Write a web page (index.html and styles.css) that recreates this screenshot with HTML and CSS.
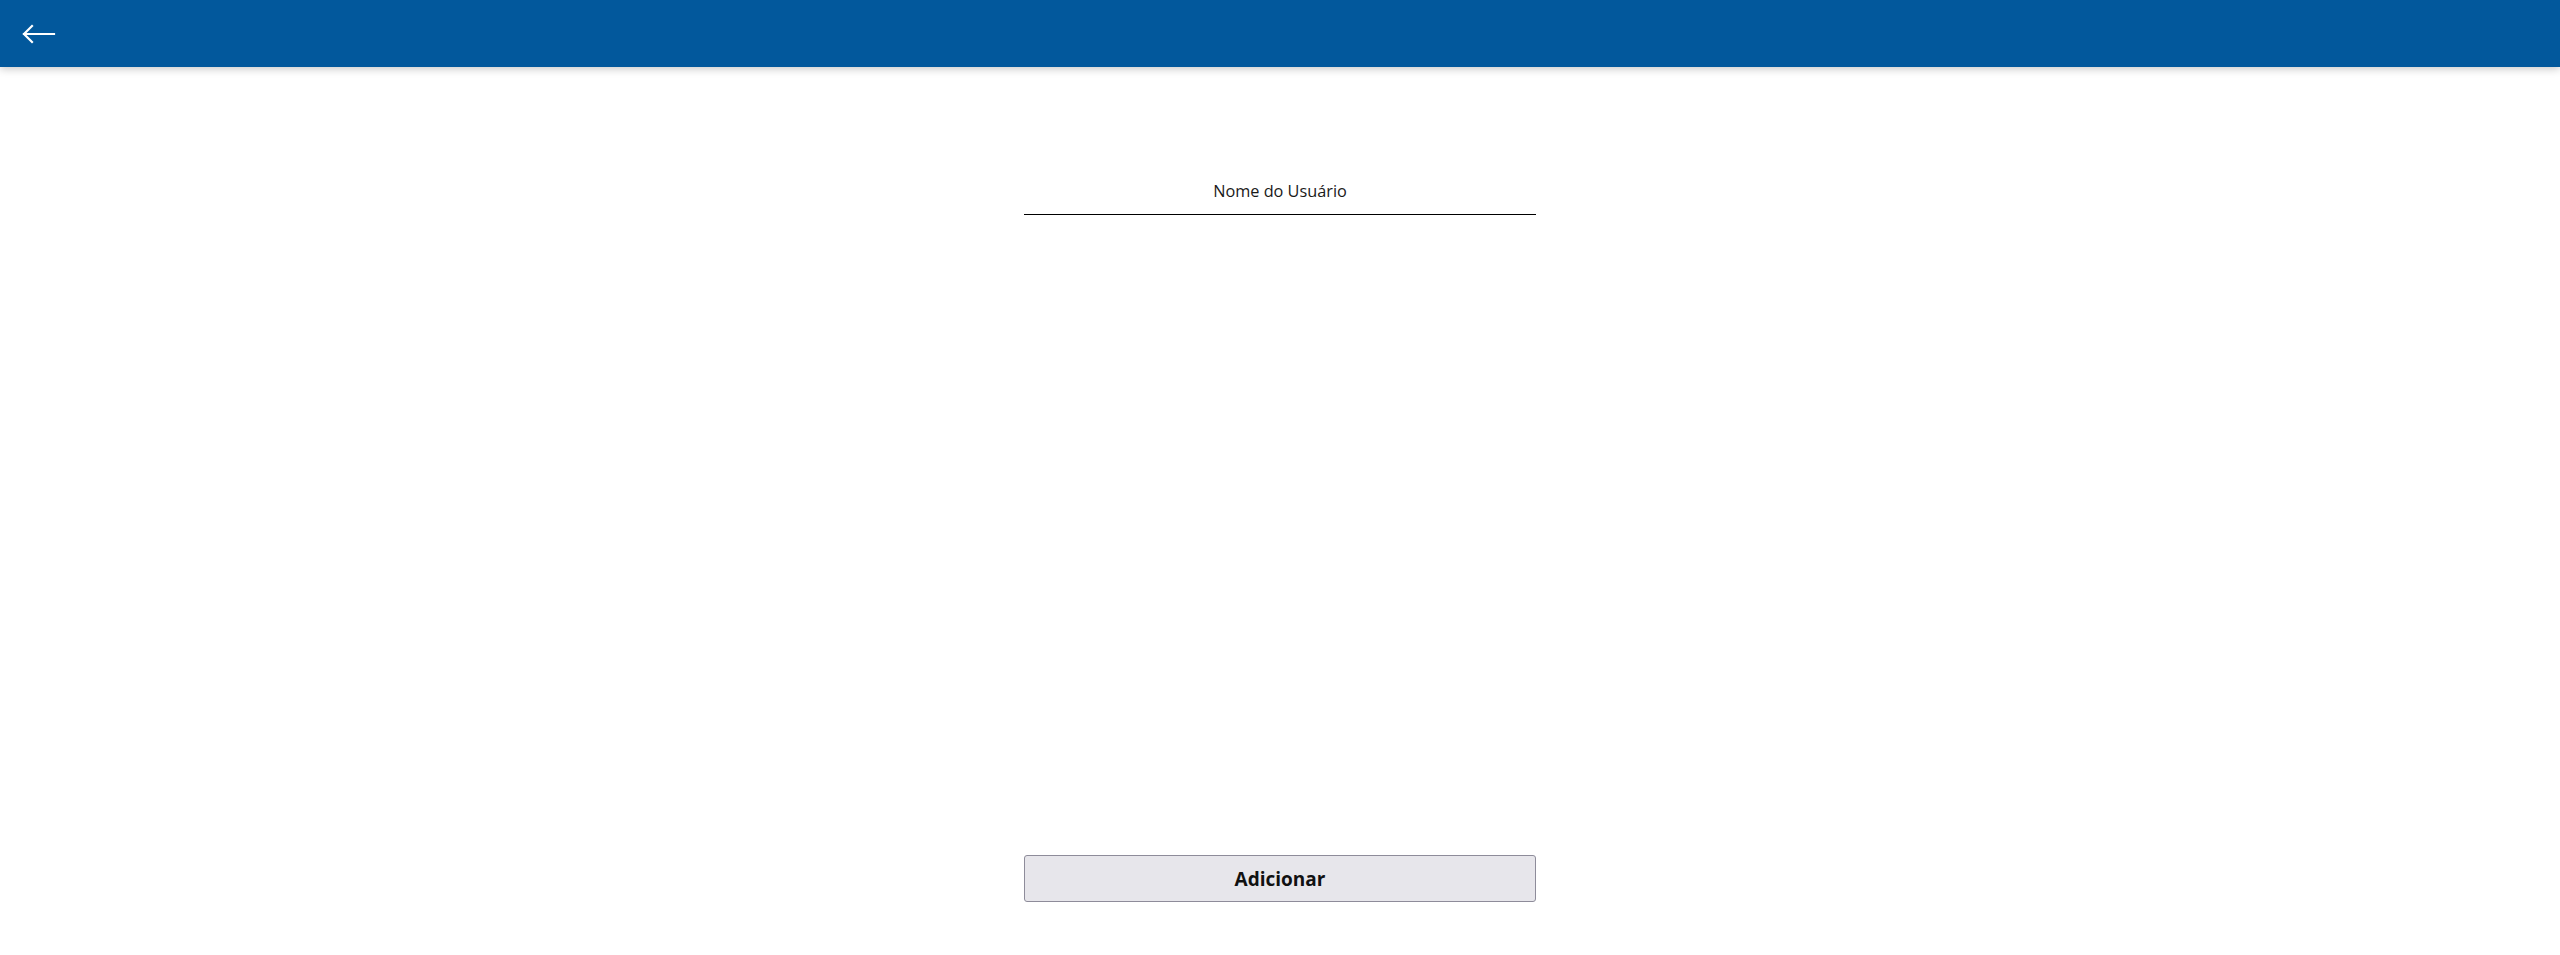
FILE: index.html
```html
<!DOCTYPE html>
<html lang="pt-BR">
<head>
<meta charset="utf-8">
<title>Adicionar Usuário</title>
<link rel="stylesheet" href="styles.css">
</head>
<body>
<div class="app">
  <header class="topbar">
    <button class="back" aria-label="Voltar">
      <svg width="34" height="20" viewBox="0 0 34 20" fill="none" stroke="#fff" stroke-width="2.2" stroke-linecap="square">
        <path d="M2 10 H32"/>
        <path d="M10 2 L2 10 L10 18"/>
      </svg>
    </button>
  </header>
  <main class="content">
    <div class="form">
      <label class="field">
        <span class="field-label">Nome do Usuário</span>
      </label>
    </div>
    <button class="primary">Adicionar</button>
  </main>
</div>
</body>
</html>
```
FILE: styles.css
```css
* { box-sizing: border-box; }
html, body { margin: 0; padding: 0; height: 100%; }
body {
  font-family: "Open Sans", "Noto Sans", sans-serif;
  background: #fff;
  color: #111;
}
.app {
  display: flex;
  flex-direction: column;
  height: 100vh;
}
.topbar {
  height: 67px;
  flex: none;
  background: #02589c;
  box-shadow: 0 2px 8px rgba(0,0,0,0.22);
  display: flex;
  align-items: center;
  padding-left: 22px;
  position: relative;
  z-index: 1;
}
.back {
  background: none;
  border: none;
  padding: 0;
  display: flex;
  cursor: pointer;
}
.content {
  flex: 1;
  display: flex;
  flex-direction: column;
  align-items: center;
  padding-bottom: 53px;
}
.form {
  flex: 1;
  width: 512px;
  padding-top: 113px;
}
.field {
  display: block;
  border-bottom: 1.5px solid #000;
  text-align: center;
  padding-bottom: 11px;
}
.field-label {
  font-size: 16.3px;
  line-height: 23px;
  color: #1a1a1a;
}
.primary {
  width: 512px;
  height: 47px;
  background: #e7e6eb;
  border: 1px solid #8e8c9a;
  border-radius: 3px;
  font-family: "Open Sans", "Noto Sans", sans-serif;
  font-weight: 700;
  font-size: 19px;
  color: #111;
  cursor: pointer;
}
```
